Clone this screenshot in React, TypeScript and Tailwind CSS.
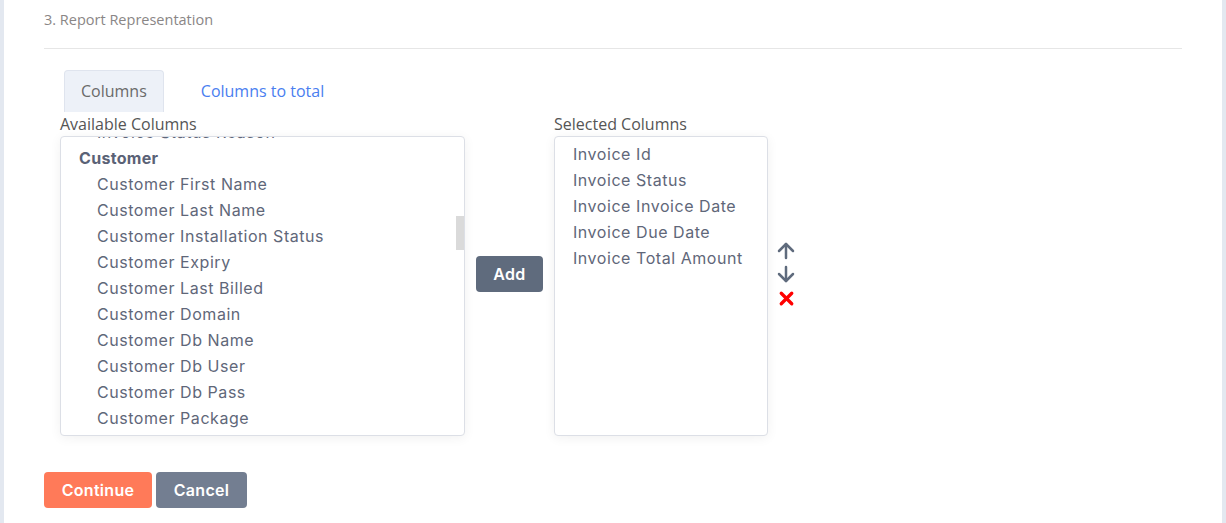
import { ArrowDown, ArrowUp, X } from "lucide-react"

const available = [
  { label: "Invoice Status Reason", group: false },
  { label: "Customer", group: true },
  { label: "Customer First Name", group: false },
  { label: "Customer Last Name", group: false },
  { label: "Customer Installation Status", group: false },
  { label: "Customer Expiry", group: false },
  { label: "Customer Last Billed", group: false },
  { label: "Customer Domain", group: false },
  { label: "Customer Db Name", group: false },
  { label: "Customer Db User", group: false },
  { label: "Customer Db Pass", group: false },
  { label: "Customer Package", group: false },
  { label: "Customer Created At", group: false },
]

const selected = [
  "Invoice Id",
  "Invoice Status",
  "Invoice Invoice Date",
  "Invoice Due Date",
  "Invoice Total Amount",
]

const labelFont = "font-['Open_Sans',_'Liberation_Sans',_sans-serif]"
const itemFont = "font-['Inter',_'Noto_Sans',_sans-serif]"

export default function App() {
  return (
    <div className="flex min-h-[523px] bg-[#e3e8f0] px-1">
      <div className="flex-1 bg-white px-10 pt-[10px]">
        {/* Section title */}
        <div className={`${labelFont} text-[14.5px] leading-5 text-[#8a8686]`}>3. Report Representation</div>
        <div className="mt-[18px] border-t border-[#e6e6e6]" />

        {/* Tabs */}
        <div className={`${labelFont} mt-[21px] ml-5 flex gap-5 text-[16px]`}>
          <div className="flex h-[42px] items-center rounded-t-[4px] border border-b-0 border-[#dfe4ee] bg-[#edf1f8] px-[16px] pb-[2px] text-[#6a6a6a]">
            Columns
          </div>
          <div className="flex h-[42px] items-center px-[17px] text-[#4a7ef0]">Columns to total</div>
        </div>

        {/* Column pickers */}
        <div className="ml-4 flex items-center">
          <div className="flex flex-col">
            <div className={`${labelFont} text-[16px] leading-6 text-[#555]`}>Available Columns</div>
            <div className="relative h-[300px] w-[405px] overflow-hidden rounded-[4px] border border-[#dcdfe6] bg-white shadow-[0_2px_12px_rgba(0,0,0,0.06)]">
              <div className={`${itemFont} -mt-[18px] text-[16px] leading-[26px] tracking-[0.55px] text-[#5f6779]`}>
                {available.map((item) =>
                  item.group ? (
                    <div key={item.label} className="pl-[18px] font-bold tracking-[0.3px] text-[#5a6276]">
                      {item.label}
                    </div>
                  ) : (
                    <div key={item.label} className="pl-[36px]">
                      {item.label}
                    </div>
                  )
                )}
              </div>
              <div className="absolute right-0 top-[79px] h-[34px] w-[8px] bg-[#dadada]" />
            </div>
          </div>

          <button
            className={`${itemFont} mx-[11px] h-[36px] w-[67px] rounded-[4px] bg-[#5f6b7d] text-[16px] font-semibold tracking-[0.3px] text-white`}
          >
            Add
          </button>

          <div className="flex flex-col">
            <div className={`${labelFont} text-[16px] leading-6 text-[#555]`}>Selected Columns</div>
            <div className="h-[300px] w-[214px] overflow-hidden rounded-[4px] border border-[#dcdfe6] bg-white pt-[4px] shadow-[0_2px_12px_rgba(0,0,0,0.06)]">
              <div className={`${itemFont} text-[16px] leading-[26px] tracking-[0.55px] text-[#5f6779]`}>
                {selected.map((s) => (
                  <div key={s} className="pl-[18px]">
                    {s}
                  </div>
                ))}
              </div>
            </div>
          </div>

          <div className="ml-[6px] flex flex-col items-center">
            <ArrowUp size={24} strokeWidth={2.5} className="-mb-px text-[#5f6b7d]" />
            <ArrowDown size={24} strokeWidth={2.5} className="text-[#5f6b7d]" />
            <X size={21} strokeWidth={3.8} className="mt-[2px] text-[#ff0000]" />
          </div>
        </div>

        {/* Actions */}
        <div className={`${itemFont} mt-[36px] flex gap-1 pb-[15px]`}>
          <button className="h-[36px] w-[108px] rounded-[4px] bg-[#ff7a59] text-[16px] font-semibold tracking-[0.3px] text-white">
            Continue
          </button>
          <button className="h-[36px] w-[91px] rounded-[4px] bg-[#737e91] text-[16px] font-semibold tracking-[0.3px] text-white">
            Cancel
          </button>
        </div>
      </div>
    </div>
  )
}
